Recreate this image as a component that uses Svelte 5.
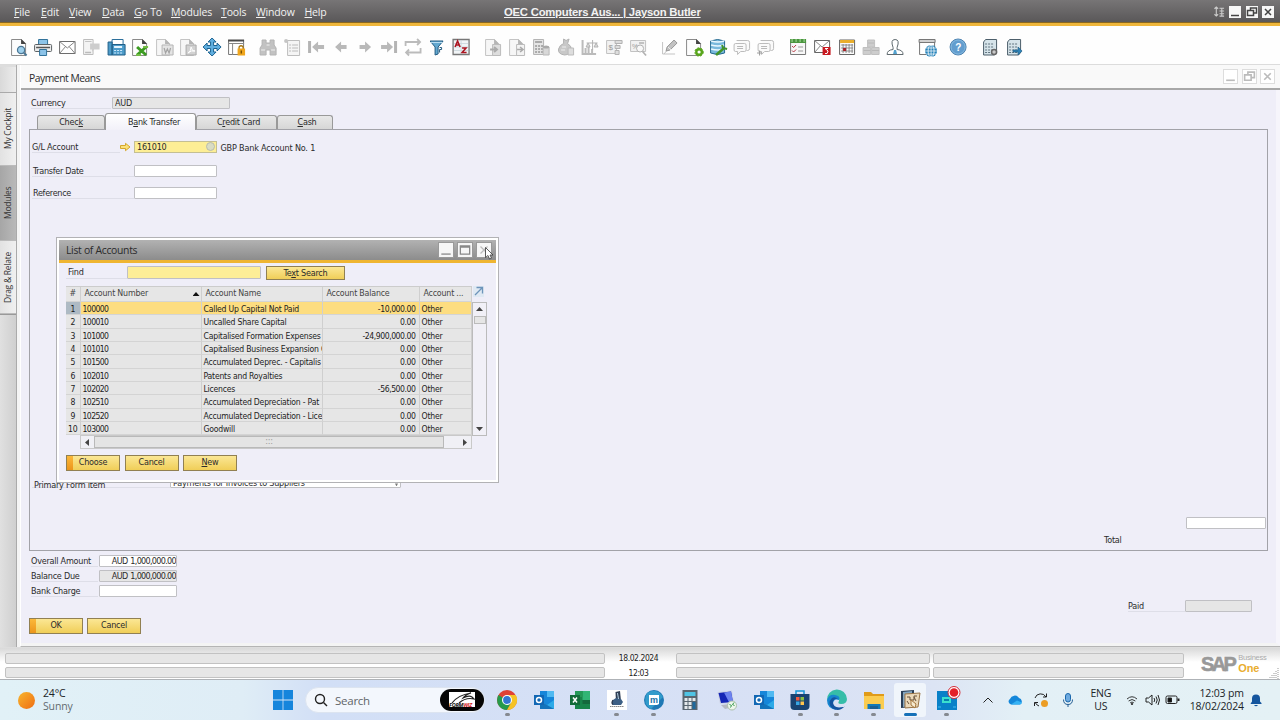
<script>
  const menus = [
    { key: "F", rest: "ile", width: 27 },
    { key: "E", rest: "dit", width: 28 },
    { key: "V", rest: "iew", width: 33 },
    { key: "D", rest: "ata", width: 32 },
    { key: "G", rest: "o To", width: 37 },
    { key: "M", rest: "odules", width: 50 },
    { key: "T", rest: "ools", width: 35 },
    { key: "W", rest: "indow", width: 48.5 },
    { key: "H", rest: "elp", width: 40 },
  ];

  const page = `<path d="M4.5 4.5h10l4 4v12h-14z" fill="#fdfdfd" stroke="#8a8a8a"/><path d="M14 4l5 5h-5z" fill="#444"/>`;
  const greyPage = `<path d="M4.5 4.5h9l4 4v12h-13z" fill="#f6f6f6" stroke="#c4c4c4"/><path d="M13 4l5 5h-5z" fill="#b5b5b5"/>`;
  const server = `<path d="M5.5 7l2-2.5h11v13l-2 2.5h-11z" fill="#d6e4ea" stroke="#4d5f6b"/><path d="M7 9h9M7 12h9M7 15h9M7 17.5h9" stroke="#60747f" stroke-dasharray="2 1"/>`;
  const globe = `<circle r="6" fill="#2583ba"/><path d="M-6 0h12M0-6v12M-5-3h10M-5 3h10" stroke="#fff" stroke-width=".7"/><ellipse rx="3" ry="6" fill="none" stroke="#fff" stroke-width=".8"/>`;
  const bubble = `<path d="M6.5 5.5h11q2 0 2 2v6q0 2-2 2h-1M5.5 8.5h9q1.5 0 1.5 1.5v5q0 1.5-1.5 1.5h-4l-3 3v-3h-2Q4 16.5 4 15V10q0-1.5 1.5-1.5z" fill="#fafafa" stroke="#bcbcbc"/><path d="M7 11.5h6M7 13.5h6" stroke="#b8b8b8"/>`;

  const toolGroups = [
    [
      page + `<circle cx="14" cy="15" r="3.6" fill="#9fd0ec" stroke="#4b7795" stroke-width="1.3"/><path d="M16.7 17.7l2.8 2.8" stroke="#4b7795" stroke-width="2"/>`,
      `<path d="M7.5 4.5h9v5h-9z" fill="#8cc3e8" stroke="#32739b"/><rect x="3.5" y="9.5" width="17" height="7" rx="1" fill="#eee" stroke="#5c6265"/><path d="M5 12.5h14" stroke="#555" stroke-width="1.5"/><path d="M8.5 14.5h7v6h-7z" fill="#8cc3e8" stroke="#32739b"/>`,
      `<path d="M4.5 6.5H20v12H4.5z" fill="#fff" stroke="#6d6d6d"/><path d="M4.5 6.5l7.75 6.500L20 6.500M4.500 18.500l6-7M20 18.500l-6-7" fill="none" stroke="#888"/>`,
      `<path d="M4.5 4.5H14v15H4.5z" fill="#f4f4f4" stroke="#bdbdbd"/><path d="M6 6.5h6.5" stroke="#c4c4c4"/><path d="M11 8.5h9.5v6H15L13 17v-2.5h-2z" fill="#cdcdcd"/><path d="M6 17.5h6" stroke="#bbb" stroke-width="1.5"/>`,
      `<path d="M8 4.5h11v6H8z" fill="#fff" stroke="#2c6f9b"/><path d="M4 7h4v13H4zM8 9.5h13V20H8z" fill="#4c9bc9" stroke="#215f88"/><path d="M10 12h8" stroke="#e4f5ff" stroke-width="2"/><path d="M10 15.5h9M10 18h9" stroke="#cdeaff" stroke-dasharray="2 1"/>`,
      page + `<path d="M9 12l9 8M18 12l-9 8" stroke="#3d9c22" stroke-width="3"/><path d="M8 20h5M15 12h5" stroke="#73bd44" stroke-width="2"/>`,
      greyPage + `<path d="M10 10h11v10H10z" fill="#e4e4e4" stroke="#b5b5b5"/><path d="M12 13l1.5 5 1.8-4 1.7 4 1.5-5" fill="none" stroke="#a4a4a4" stroke-width="1.2"/>`,
      greyPage + `<path d="M10 10h10v10H10z" fill="#d2d2d2" stroke="#aaa"/><path d="M12 18q3-2 3-6 1 5 4 4-4-1-7 2" fill="none" stroke="#fff"/>`,
      `<path d="M12 3l4 4h-2.5v3.5H17V8l4 4-4 4v-2.5h-3.5V17H16l-4 4-4-4h2.5v-3.500H7V16l-4-4 4-4v2.500h3.500V7H8z" fill="#60afe0" stroke="#1c6391"/>`,
      `<path d="M4.5 5.5h15v14h-15z" fill="#fff" stroke="#777"/><path d="M4 5.5h16" stroke="#4a4a4a" stroke-width="2"/><path d="M4 8.5h16M8.5 9v11" stroke="#888"/><path d="M15 14v-2q2-2.5 4 0v2" fill="none" stroke="#aa7913" stroke-width="1.3"/><path d="M13.5 13.5H21v7h-7.5z" fill="#efa51c"/><path d="M17.2 15.5v3" stroke="#714b00" stroke-width="1.3"/>`,
    ],
    [
      `<path d="M6 5h4v3h4V5h4v5l2 3v7h-6v-5h-4v5H4v-7l2-3z" fill="#c2c2c2" stroke="#b4b4b4"/><path d="M5 15h4M15 15h4M10.5 10h3" stroke="#f0f0f0"/>`,
      `<path d="M7.5 5.5h12v15h-12z" fill="#f5f5f5" stroke="#bdbdbd"/><circle cx="6" cy="6" r="2" fill="#c5c5c5"/><path d="M9 10h2M12 10h6M9 13h2M12 13h6M9 16h2M12 16h6" stroke="#bbb"/>`,
      `<path d="M5.5 6v12" stroke="#b4b4b4" stroke-width="3"/><path d="M8 12l6-5.5V10h6v4h-6v3.5z" fill="#b9b9b9"/>`,
      `<path d="M6 12l6-5.5V10h5.5v4H12v3.5z" fill="#b9b9b9"/>`,
      `<path d="M18 12l-6-5.5V10H6.5v4H12v3.5z" fill="#b9b9b9"/>`,
      `<path d="M18.5 6v12" stroke="#b4b4b4" stroke-width="3"/><path d="M16 12l-6-5.5V10H4v4h6v3.5z" fill="#b9b9b9"/>`,
      `<path d="M4.5 11V7h14M16 4l3 3-3 3M19.5 13v4.5h-14M8 14.5l-3 3 3 3" fill="none" stroke="#bbb" stroke-width="1.8"/>`,
      `<path d="M5 6h13l-5 6v7l-3 1v-8z" fill="#62a8d0" stroke="#245c82"/><path d="M6 7.5h11" stroke="#b9def3"/><path d="M14.5 12.5h2v2h-2v3" fill="none" stroke="#245c82"/>`,
      `<path d="M4 4.5h16v15H4z" fill="#f1f4f6" stroke="#777" stroke-width="1.3"/><path d="M5 12h14M12 5v14M5 8.5h14M5 15.5h14" stroke="#c8d4da" stroke-width=".8"/><path d="M6 12l2.5-6L11 12M7 10h3" fill="none" stroke="#ac1420" stroke-width="1.6"/><path d="M13 13h4l-4 4.5h4.5" fill="none" stroke="#ac1420" stroke-width="1.5"/>`,
    ],
    [
      greyPage + `<path d="M11.5 9.5h8v11h-8z" fill="#ddd" stroke="#bbb"/><path d="M9 14.5h6M13 12l3 2.5-3 2.5" fill="none" stroke="#aaa" stroke-width="1.8"/>`,
      greyPage + `<path d="M11.5 9.5h8v11h-8z" fill="#f3f3f3" stroke="#bbb"/><path d="M12 14.5h6M15 12l3 2.5-3 2.5" fill="none" stroke="#aaa" stroke-width="1.5"/>`,
      `<path d="M4.5 4.5h10v15h-10z" fill="#e5e5e5" stroke="#b5b5b5"/><path d="M6 7h7" stroke="#aaa" stroke-width="2"/><path d="M6 11h8M6 14h8M6 17h8" stroke="#aaa" stroke-width="2" stroke-dasharray="2 1"/><path d="M14 12h6v8h-6z" fill="#d8d8d8" stroke="#b9b9b9"/><ellipse cx="17" cy="12" rx="3" ry="1.5" fill="#aaa"/>`,
      `<path d="M9.5 4L12 5.5 15 4l-1.5 4.5q4 2 4 7-1 4-7 4.5-7-1-6-6 1-4 5-5.5z" fill="#c8c8c8" stroke="#b2b2b2"/><path d="M14 13h5.5v7H14z" fill="#ddd" stroke="#bbb"/><path d="M8 12h4M7 15h4" stroke="#eee"/>`,
      `<path d="M4.5 5v14H18M7.5 18v-5M10.5 18V10M14 18v-4" stroke="#bbb" stroke-width="2"/><path d="M8.5 8h11M14.5 5v10M10 8l-2 4h4zM18 8l-2 4h4z" fill="#ddd" stroke="#b2b2b2"/>`,
      `<path d="M4.5 5.5h10v13h-10z" fill="#f1f1f1" stroke="#c2c2c2"/><text x="6.5" y="15" font-size="8" fill="#999">$</text><path d="M13 5.5h7v3h-7zM13 10.5h5v3h-5zM13 15.5h4v4h-4z" fill="#ddd" stroke="#b2b2b2"/>`,
      `<path d="M4.5 5.5h15v11h-15z" fill="#f1f1f1" stroke="#c2c2c2"/><text x="6" y="14" font-size="7" fill="#999">%</text><circle cx="14" cy="13.5" r="3.5" fill="#f8f8f8" stroke="#b2b2b2"/><path d="M16.5 16.5l3.5 4M13 8h5" stroke="#b2b2b2" stroke-width="1.7"/>`,
    ],
    [
      `<path d="M4.5 7v12H17M6 19l3-4" fill="none" stroke="#c4c4c4"/><path d="M8 16l1-4 7-7 3 3-7 7z" fill="#c3c3c3" stroke="#999"/><path d="M10 12l3 3" stroke="#eee"/>`,
      page + `<circle cx="17" cy="17" r="2.8" fill="#fff" stroke="#58a51b" stroke-width="2.4"/><circle cx="17" cy="17" r="4.2" fill="none" stroke="#58a51b" stroke-dasharray="2 1.5"/>`,
      `<path d="M4.5 6q7-3 14 0v12q-7 3-14 0z" fill="#79b9dd" stroke="#26698f"/><path d="M5 6q7 2 13 0M5 10q7 2 13 0M5 14q7 2 13 0" fill="none" stroke="#e9f8ff" stroke-width="1.5"/><path d="M10 20l8-7" stroke="#429429" stroke-width="2.5"/><path d="M16 10l1 3 4 1" stroke="#429429" stroke-width="2" fill="none"/>`,
      bubble,
      bubble + `<path d="M3 18h5M5.5 15.5v5" stroke="#999"/>`,
    ],
    [
      `<path d="M4.5 6.5h15v13h-15z" fill="#f7f7f7" stroke="#777"/><path d="M4 6h16" stroke="#4b963f" stroke-width="4"/><path d="M6 4v3M10 4v3M14 4v3M18 4v3" stroke="#a8d99e"/><path d="M6 11l1.5 1.5L10 10M6 15.5L7.5 17l2.5-2.5" fill="none" stroke="#b73541"/><path d="M12 12h5M12 16h5" stroke="#999"/>`,
      `<path d="M4.5 5.5h15v12h-15z" fill="#fff" stroke="#666"/><path d="M4.5 5.5L12 12l7.5-6.5M4.5 17.5l6-7" fill="none" stroke="#888"/><path d="M12.5 12h8v8h-8z" fill="#c71920"/><path d="M18 13.5h-3l3 2.5-1 2.5h-2" fill="none" stroke="#fff"/>`,
      `<path d="M4.5 5h15v14.5h-15z" fill="#fafafa" stroke="#666"/><path d="M5 6.5h14" stroke="#e9ae2b" stroke-width="3"/><path d="M6 10h12M6 13h12M6 16h12M8 9v9M11 9v9M14 9v9M17 9v9" stroke="#777" stroke-width=".8"/><path d="M8 13h3v3H8z" fill="#a92128"/>`,
      `<path d="M8.5 5h7v7h-7zM4 12.5h7.5v7H4zM12.5 12.5H20v7h-7.5z" fill="#cdcdcd" stroke="#c0c0c0"/><path d="M9 8h6M4.5 15.5h7M13 15.5h7" stroke="#b8b8b8"/>`,
      `<path d="M4 19.5q0-4.5 6-5v-2q-3-8 2-8t2 8v2q6 .5 6 5z" fill="#fff" stroke="#606b70"/><path d="M11 15h2l1 4h-4z" fill="#54a2cf"/>`,
    ],
    [`<path d="M4.5 6.5h15v13h-15z" fill="#fff" stroke="#777"/><path d="M4 4.5h16v3H4z" fill="#d1d1d1" stroke="#777"/><g transform="translate(16 16)">${globe}</g>`],
    [`<circle cx="12" cy="12" r="8" fill="#629dce" stroke="#4f83b0"/><circle cx="12" cy="12" r="7" fill="none" stroke="#83b8df"/><text x="9.2" y="15.6" font-size="10" font-weight="bold" fill="#fff">?</text>`],
    [
      server + `<circle cx="16" cy="17" r="2.5" fill="#c9c9c9" stroke="#666" stroke-width="1.5"/>`,
      server + `<path d="M11 15h5v-3l4 4-4 4v-3h-5z" fill="#2f83b6" stroke="#215f86" stroke-width=".7"/>`,
    ],
  ];

  const accounts = [
    ["100000", "Called Up Capital Not Paid", "-10,000.00"],
    ["100010", "Uncalled Share Capital", "0.00"],
    ["101000", "Capitalised Formation Expenses", "-24,900,000.00"],
    ["101010", "Capitalised Business Expansion C", "0.00"],
    ["101500", "Accumulated Deprec. - Capitalis", "0.00"],
    ["102010", "Patents and Royalties", "0.00"],
    ["102020", "Licences", "-56,500.00"],
    ["102510", "Accumulated Depreciation - Pat", "0.00"],
    ["102520", "Accumulated Depreciation - Lice", "0.00"],
    ["103000", "Goodwill", "0.00"],
  ];
  let selected = $state(0);

  const outlook = `<path d="M8 3h14v18H8z" fill="#1686d9"/><path d="M15 3h7v6h-7z" fill="#50b9f1"/><path d="M8 13l7 4 7-5v9H8z" fill="#2daae8"/><path d="M8 13l14 8H8z" fill="#1373bb"/><path d="M2 7h10v10H2z" fill="#1167b4"/><circle cx="7" cy="12" r="2.5" fill="none" stroke="#fff" stroke-width="1.5"/>`;

  const apps = [
    { name: "Chrome", open: true, art: `<circle cx="12" cy="12" r="10" fill="#e04135"/><path d="M12 12L3.4 7A10 10 0 0 0 12 22l4.3-7.5z" fill="#269a4b"/><path d="M12 12l4.3 2.5L12 22A10 10 0 0 0 20.7 7H12z" fill="#f5c325"/><circle cx="12" cy="12" r="5" fill="#fff"/><circle cx="12" cy="12" r="3.9" fill="#3476d2"/>` },
    { name: "Outlook", art: outlook },
    { name: "Excel", art: `<path d="M7 3h15v18H7z" fill="#18844a"/><path d="M14.5 3H22v9h-7.5z" fill="#31b575"/><path d="M7 3h7.5v6H7z" fill="#239957"/><path d="M14.5 12H22v4h-7.5z" fill="#14693c"/><path d="M2 7h10v10H2z" fill="#126b39"/><path d="M5 9.5l4 5M9 9.5l-4 5" stroke="#fff" stroke-width="1.5"/>` },
    { name: "Sailor", open: true, art: `<path d="M2 2h20v20H2z" fill="#fff"/><path d="M10.5 4L15 3l1 10-5 1z" fill="#303f55"/><path d="M11 10l-3 2q-2 3 0 5h8l2-3-2-3z" fill="#3c5f85"/><path d="M8 12q-2 3 0 4.5" fill="none" stroke="#223047" stroke-width="1.2"/><path d="M5 18.5h14" stroke="#888" stroke-dasharray="1.5 .5"/><path d="M12.5 5l1 6" stroke="#b7d3e5"/>` },
    { name: "Maxthon", open: true, art: `<circle cx="12" cy="12" r="10" fill="#1e78b5"/><path d="M5 5q10-6 16 4L9 21Q0 16 5 5z" fill="#329bcb"/><path d="M7 7h10v9l-2 1H7z" fill="#fff"/><text x="8" y="15" font-size="9" font-weight="bold" fill="#1771a8">m</text>` },
    { name: "Calculator", art: `<path d="M4.5 2h15v20h-15z" fill="#596671"/><path d="M6.5 4h11v4h-11z" fill="#4fc4e5"/><path d="M6.5 10h3v3h-3zM10.5 10h3v3h-3zM14.5 10h3v3h-3zM6.5 14h3v3h-3zM10.5 14h3v3h-3zM6.5 18h3v3h-3zM10.5 18h3v3h-3z" fill="#e4e9ec"/><path d="M14.5 14h3v7h-3z" fill="#1f699c"/>` },
    { name: "Remote Desktop", art: `<path d="M2.5 4L17 2.5 19 15 5 16z" fill="#cdd3e6"/><path d="M3.5 5L16 3.5 18 14 6 15z" fill="#1526b5"/><path d="M9 4.5l7-1L18 14l-4 .3z" fill="#6d83ee"/><path d="M6 17l10-1 3 3-9 2z" fill="#b7bbc3"/><circle cx="17" cy="17.5" r="4.5" fill="#edf6ec" stroke="#abc0aa"/><path d="M14.5 16.5l2 1-1 2M19 14.5l-1.5 2 2 1" stroke="#2e9446" fill="none"/>` },
    { name: "Outlook", art: outlook },
    { name: "Store", open: true, art: `<path d="M8 7V3h8v4" fill="none" stroke="#1397d8" stroke-width="1.5"/><path d="M2.5 6h19v12q0 4-4 4h-11q-4 0-4-4z" fill="#184372"/><path d="M8 9h3.5v3.5H8z" fill="#ef5840"/><path d="M12.5 9H16v3.5h-3.5z" fill="#87bd42"/><path d="M8 13.5h3.5V17H8z" fill="#39a6e3"/><path d="M12.5 13.5H16V17h-3.5z" fill="#ffc44d"/>` },
    { name: "Edge", open: true, art: `<path d="M2 12A10 10 0 0 1 22 11q0 5-6 5-4 0-2-3 1-3-3-4-6 0-9 3z" fill="#36bda8"/><path d="M2 12Q4 6 10 7q6 1 4 5-5-2-6 3-1 4 4 7Q2 21 2 12z" fill="#1685cf"/><path d="M8 14q0 7 10 5 2 0 2-1-6 7-13 2-5-5 0-10 3-2 6 1-4-1-5 3z" fill="#15549f"/>` },
    { name: "Files", open: true, art: `<path d="M2 4h7l2 2h11v6H2z" fill="#e09b19"/><path d="M2 8h20v13H2z" fill="#fbcc4f"/><path d="M5.5 16h13v5h-13z" fill="#1279b8"/><path d="M8 18h8v3H8z" fill="#1b5f92"/>` },
    { name: "SAP Business One", open: true, active: true, art: `<path d="M3 3l13-1v17L3 20z" fill="#293e57"/><path d="M5 4l9-1v15l-9 1z" fill="#84a6bf"/><path d="M7 6l15-1-2 14-13 1z" fill="#ead8b9" stroke="#9a7548"/><path d="M9 9h3v3h4V8h3M9 13l2 3M16 9l2 4" fill="none" stroke="#67513a"/><path d="M13 12l5 4-1 4-4-3z" fill="#f5ead0" stroke="#a6763c"/>` },
    { name: "Recorder", open: true, art: `<path d="M2 3h20v19H2z" fill="#0981c8"/><path d="M7 9h9v6H7z" fill="#3be0ce"/><path d="M9 11h5v2H9z" fill="#0581ab"/><path d="M3 19h3M18 19h3" stroke="#42baf0"/><circle cx="19" cy="4.5" r="6" fill="#fff" stroke="#d32b37"/><circle cx="19" cy="4.5" r="4.3" fill="#e32028"/>` },
  ];
</script>

<svelte:head><title>Payment Means</title></svelte:head>

{#snippet winButton(kind)}
  <svg viewBox="0 0 12 12">
    {#if kind === "min"}
      <path d="M2 9.500h8" />
    {:else if kind === "restore"}
      <path d="M4.500 4V2h6v5H8M1.500 4.500h6v5h-6z" />
    {:else if kind === "max"}
      <path d="M2 2.500h8v7H2zM2 3.500h8" />
    {:else}
      <path d="M3 3l6 6M9 3l-6 6" />
    {/if}
  </svg>
{/snippet}

<div class="screen">
  <header class="menubar">
    <nav>
      {#each menus as menu}
        <span style="width: {menu.width}px"><u>{menu.key}</u>{menu.rest}</span>
      {/each}
    </nav>
    <div class="session">OEC Computers Aus... | Jayson Butler</div>
    <div class="controls">
      <svg class="updown" viewBox="0 0 12 12"><path d="M2.500 1v10M.5 3l2-2 2 2M.5 9l2 2 2-2M6 2.500h5M6 5.500h5M6 8.500h5M6 11h5M8.500 2v9" /></svg>
      {#each ["min", "restore", "close"] as kind}
        <button aria-label={kind}>{@render winButton(kind)}</button>
      {/each}
    </div>
  </header>

  <div class="toolbar">
    {#each toolGroups as group}
      <div class="tool-group">
        {#each group as icon}
          <svg viewBox="0 0 24 24" fill="none">{@html icon}</svg>
        {/each}
      </div>
    {/each}
  </div>

  <div class="workspace">
    <aside>
      <div class="side-top"></div>
      <div class="side-tab">My Cockpit</div>
      <div class="side-tab current">Modules</div>
      <div class="side-tab">Drag &amp; Relate</div>
      <div class="side-rest"></div>
    </aside>

    <main>
      <div class="window-title">
        <span>Payment Means</span>
        <div class="controls faded">
          {#each ["min", "restore", "close"] as kind}
            <button aria-label={kind}>{@render winButton(kind)}</button>
          {/each}
        </div>
      </div>

      <div class="form">
        <div class="row currency">
          <label for="currency">Currency</label>
          <input id="currency" class="readonly" value="AUD" readonly />
        </div>

        <div class="tabs">
          <div class="tab check">Chec<u>k</u></div>
          <div class="tab transfer">B<u>a</u>nk Transfer</div>
          <div class="tab credit">C<u>r</u>edit Card</div>
          <div class="tab cash"><u>C</u>ash</div>
        </div>

        <section class="panel">
          <div class="row gl">
            <label for="gl">G/L Account</label>
            <svg class="link-arrow" viewBox="0 0 11 9"><path d="M.5 3h5V.8l4.500 3.700-4.500 3.700V6h-5z" /></svg>
            <div class="lookup">
              <input id="gl" value="161010" />
              <i></i>
            </div>
            <span class="gl-name">GBP Bank Account No. 1</span>
          </div>
          <div class="row date">
            <label for="date">Transfer Date</label>
            <input id="date" />
          </div>
          <div class="row reference">
            <label for="ref">Reference</label>
            <input id="ref" />
          </div>
          <div class="row primary">
            <label for="primary">Primary Form Item</label>
            <div class="select" id="primary">Payments for Invoices to Suppliers<b></b></div>
          </div>
          <div class="total">
            <input aria-label="Total" />
            <span>Total</span>
          </div>
        </section>

        <div class="summary">
          <div class="amounts">
            <div class="row overall"><label for="overall">Overall Amount</label><input id="overall" value="AUD 1,000,000.00" /></div>
            <div class="row due"><label for="due">Balance Due</label><input id="due" class="readonly" value="AUD 1,000,000.00" readonly /></div>
            <div class="row charge"><label for="charge">Bank Charge</label><input id="charge" /></div>
          </div>
          <div class="row paid"><label for="paid">Paid</label><input id="paid" class="readonly" readonly /></div>
        </div>

        <div class="actions">
          <button class="gold default">OK</button>
          <button class="gold">Cancel</button>
        </div>
      </div>
    </main>
  </div>

  <footer class="status">
    <div class="bars first"><i></i><i></i></div>
    <div class="stamp"><span>18.02.2024</span><span>12:03</span></div>
    <div class="bars second"><i></i><i></i></div>
    <div class="bars third"><i></i><i></i></div>
    <div class="brand">
      <strong>SAP</strong>
      <div><span>Business</span><b>One</b></div>
    </div>
    <svg class="grip" viewBox="0 0 11 12"><path d="M9 1v11M7 4v8M5 6v6M3 8v4M1 10v2" /></svg>
  </footer>

  <div class="taskbar">
    <div class="weather">
      <i></i>
      <div><span>24°C</span><span class="dim">Sunny</span></div>
    </div>
    <svg class="start" viewBox="0 0 20 20"><path d="M0 0h9.600v9.600H0zM10.400 0H20v9.600h-9.600zM0 10.400h9.600V20H0zM10.400 10.400H20V20h-9.600z" /></svg>
    <div class="search">
      <svg viewBox="0 0 14 14"><circle cx="6" cy="6" r="4.500" /><path d="M9.500 9.500l3.500 3.500" /></svg>
      <span>Search</span>
      <div class="badge">
        <svg viewBox="0 0 28 16">
          <path d="M1 0h26v15H1z" fill="#fff" />
          <path d="M4 11Q10 3 23 1q-6 2-8 5 6-3 9-1l2 2q-8-2-15 4" fill="none" stroke="#222" stroke-width="1.200" />
          <text x="1" y="15" font-size="5.500" font-weight="bold" font-style="italic" fill="#111">FORM<tspan fill="#d52424">WIZ</tspan></text>
        </svg>
      </div>
    </div>
    <div class="apps">
      {#each apps as app}
        <div class="app" class:active={app.active} title={app.name}>
          <svg viewBox="0 0 24 24">{@html app.art}</svg>
          {#if app.open}<i></i>{/if}
        </div>
      {/each}
    </div>
    <div class="tray">
      <svg class="chevron" viewBox="0 0 16 16"><path d="M3.500 10.500L8 6l4.500 4.500" /></svg>
      <svg class="cloud" viewBox="0 0 16 16"><path d="M4 12.500a3 3 0 0 1-1-5.500 5 5 0 0 1 9-1 3.500 3.500 0 0 1 1 6.500z" fill="#1487da" /><path d="M4 12.500l6-4 5 2q-.5 2-2 2z" fill="#35b2f4" /></svg>
      <svg class="sync" viewBox="0 0 16 16"><path d="M2 6a6 6 0 0 1 11-1M13.500 1.500V5H10M2 10q1 3 4 4M1.500 14v-3.500H5" /><circle cx="11.500" cy="11.500" r="3.500" /></svg>
      <svg class="mic" viewBox="0 0 16 16"><rect x="5.500" y="1.500" width="5" height="8.500" rx="2.500" fill="#6eabe0" stroke="#1a67ac" /><path d="M3.500 7.500q0 5 4.500 5t4.500-5M8 12.500V15" /></svg>
      <div class="lang"><span>ENG</span><span>US</span></div>
      <svg class="wifi" viewBox="0 0 16 16"><path d="M3 7q5-4.500 10 0M4.600 9q3.400-3 6.800 0M6.200 10.800q1.800-1.500 3.600 0" /><circle cx="8" cy="12" r="1.100" fill="#222" stroke="none" /></svg>
      <svg class="volume" viewBox="0 0 16 16"><path d="M2 6h2.500L8 3v10l-3.500-3H2zM10 6q1.500 2 0 4M12 4.500q2.500 3.500 0 7M14 3q3 5 0 10" /></svg>
      <svg class="battery" viewBox="0 0 16 16"><rect x="2" y="4" width="11" height="7.500" rx="1.500" /><path d="M4 6h3.500v4H4z" fill="#111" /><path d="M14.500 6.500v2.500" stroke-width="2" /></svg>
      <div class="clock"><span>12:03 pm</span><span>18/02/2024</span></div>
      <svg class="bell" viewBox="0 0 12 14"><path d="M1 10l1-1.500V5.500Q2 1.500 6 1.500t4 4v3L11.500 10v1h-11zM4 12h4q-2 2.500-4 0z" /></svg>
    </div>
  </div>

  <div class="dialog" role="dialog" aria-label="List of Accounts">
    <div class="dialog-title">
      <span>List of Accounts</span>
      <div class="controls">
        {#each ["min", "max", "close"] as kind}
          <button aria-label={kind} class:hover={kind === "close"}>{@render winButton(kind)}</button>
        {/each}
      </div>
    </div>
    <div class="dialog-body">
      <div class="row find">
        <label for="find">Find</label>
        <input id="find" />
        <button class="gold">Te<u>x</u>t Search</button>
      </div>

      <div class="grid-wrap">
        <div class="grid">
          <div class="line head">
            <span>#</span>
            <span>Account Number<b class="sort"></b></span>
            <span>Account Name</span>
            <span>Account Balance</span>
            <span>Account ...</span>
          </div>
          {#each accounts as [number, name, balance], i}
            <!-- svelte-ignore a11y_click_events_have_key_events, a11y_no_static_element_interactions -->
            <div class="line" class:selected={selected === i} onclick={() => (selected = i)}>
              <span>{i + 1}</span>
              <span>{number}</span>
              <span>{name}</span>
              <span>{balance}</span>
              <span>Other</span>
            </div>
          {/each}
          <div class="hscroll"><b class="left"></b><i>:::</i><b class="right"></b></div>
        </div>
        <div class="grid-side">
          <svg viewBox="0 0 11 11"><path d="M2 9l7-7M3.500 1.500H9.500V7.500" /></svg>
          <div class="vscroll"><b class="up"></b><i></i><b class="down"></b></div>
        </div>
      </div>

      <div class="actions">
        <button class="gold default">Choose</button>
        <button class="gold">Cancel</button>
        <button class="gold"><u>N</u>ew</button>
      </div>
    </div>
  </div>

  <svg class="cursor" viewBox="0 0 9 13"><path d="M.5.5v10l2.500-2 1.500 3.500 2-.8L5 8h3z" /></svg>
</div>

<style>
  :global(body) {
    margin: 0;
    overflow: hidden;
  }

  .screen {
    position: relative;
    display: flex;
    flex-direction: column;
    width: 1280px;
    height: 720px;
    overflow: hidden;
    background: #fff;
    color: #2b2b2b;
    font: 9px/12px "DejaVu Sans Condensed", "DejaVu Sans", sans-serif;
    letter-spacing: -0.24px;
  }

  .screen * {
    box-sizing: border-box;
  }

  svg {
    display: block;
    flex: none;
  }

  button,
  input {
    margin: 0;
    padding: 0;
    font: inherit;
    color: inherit;
    letter-spacing: inherit;
  }

  u {
    text-underline-offset: 1px;
  }

  /* top bar */
  .menubar {
    display: flex;
    align-items: center;
    height: 26px;
    padding: 1px 6px 0 14px;
    background: linear-gradient(#777576, #5b595a 21px);
    border-bottom: 3px solid #efb63a;
    box-shadow: inset 0 -1px #8b6820;
    color: #f2f2f2;
    font: 10.5px/14px "Open Sans", sans-serif;
  }

  .menubar nav {
    display: flex;
    width: 490px;
  }

  .menubar nav span {
    flex: none;
    white-space: nowrap;
    letter-spacing: -0.15px;
  }

  .session {
    flex: 1;
    font: bold 11.3px/14px "Liberation Sans", sans-serif;
    letter-spacing: -0.23px;
    text-decoration: underline;
  }

  .controls {
    display: flex;
    align-items: center;
    gap: 4.5px;
  }

  .controls button {
    width: 12px;
    height: 12px;
    border: 0;
    background: #f7f7f7;
  }

  .controls svg {
    width: 100%;
    height: 100%;
    fill: none;
    stroke: #444;
    stroke-width: 1.5;
  }

  .controls .updown {
    width: 11px;
    height: 11px;
    stroke: #ccc;
    stroke-width: 1.2;
  }

  .toolbar {
    display: flex;
    align-items: center;
    gap: 7.6px;
    height: 39px;
    padding: 5px 0 0 7px;
    border-bottom: 1px solid #dcdcdc;
    background: #fefefe;
  }

  .tool-group {
    display: flex;
  }

  .tool-group svg {
    width: 24.16px;
    height: 24px;
    font-family: "Liberation Sans", sans-serif;
  }

  /* left rail */
  .workspace {
    display: flex;
    height: 583px;
    background: #f4f4f4;
  }

  aside {
    display: flex;
    flex: none;
    flex-direction: column;
    width: 17px;
    margin-right: 3px;
    padding-top: 2px;
    border-right: 1px solid #aaa;
    background: #ddd;
  }

  .side-top {
    height: 26px;
    background: linear-gradient(90deg, #d9d9d9, #ececec);
    border-bottom: 1px solid #aaa;
  }

  .side-tab {
    height: 73px;
    border-top: 1px solid #bbb;
    background: linear-gradient(90deg, #f0f0f0, #e2e2e2);
    color: #333;
    font: 8.5px/16px "Open Sans", sans-serif;
    letter-spacing: -0.25px;
    text-align: center;
    writing-mode: vertical-rl;
    transform: rotate(180deg);
  }

  .side-tab.current {
    height: 75px;
    background: linear-gradient(90deg, #b9b9b9, #a6a6a6);
  }

  .side-rest {
    flex: 1;
    border-top: 1px solid #999;
    background: linear-gradient(90deg, #e0e0e0, #cfcfcf);
  }

  /* payment window */
  main {
    display: flex;
    flex: 1;
    flex-direction: column;
    border-left: 1px solid #fff;
    border-bottom: 1px solid #b5b5b5;
  }

  .window-title {
    display: flex;
    justify-content: space-between;
    height: 25px;
    padding: 0 5px 0 8px;
    border-bottom: 2px solid #a8a8a8;
    background: #f9f9f9;
    font: 10.3px/26px "Open Sans", sans-serif;
    letter-spacing: -0.45px;
  }

  .faded {
    gap: 3.5px;
  }

  .faded button {
    width: 15px;
    height: 15px;
    border: 1px solid #ddd;
    background: #fff;
  }

  .faded svg {
    stroke: #bbb;
  }

  .form {
    flex: 1;
    padding: 7px 8px 0 8px;
    border-right: 4px solid #f6f5fb;
    border-bottom: 3px solid #f4f4f4;
    background: #efeef8;
  }

  .row {
    display: flex;
    height: 12px;
  }

  .row label {
    height: 12px;
    border-bottom: 1px solid #dedee8;
    line-height: 13px;
  }

  input,
  .select {
    width: 82.5px;
    height: 12px;
    border: 1px solid #c0c0c4;
    border-radius: 1px;
    outline: 0;
    background: #fff;
    padding: 0 2px;
    line-height: 10px;
  }

  input.readonly {
    background: #e6e6e6;
  }

  .currency label {
    width: 80px;
    margin-left: 2px;
    margin-right: 1px;
  }

  .currency input {
    width: 118px;
  }

  .tabs {
    display: flex;
    align-items: flex-end;
    height: 20px;
    padding-left: 8px;
  }

  .tab {
    height: 14px;
    border: 1px solid #999;
    border-bottom: 0;
    border-radius: 3px 3px 0 0;
    background: linear-gradient(#e8e8e8, #d6d6d6);
    line-height: 13px;
    text-align: center;
  }

  .check {
    width: 68px;
  }

  .transfer {
    width: 91px;
    height: 17px;
    margin-bottom: -1px;
    padding: 2px 0 0 7px;
    background: linear-gradient(#fff, #f2f1f9);
  }

  .credit {
    width: 81px;
    padding-left: 4px;
  }

  .cash {
    width: 56px;
    padding-left: 4px;
  }

  .panel {
    height: 422px;
    padding-top: 11px;
    border: 1px solid #a2a2a8;
  }

  .panel .row {
    padding-left: 2px;
  }

  .panel label {
    width: 102px;
  }

  .panel .gl label {
    width: 88px;
    line-height: 12px;
  }

  .link-arrow {
    width: 11px;
    height: 10px;
    margin: 1px 3px 0 0;
    fill: #fbe17a;
    stroke: #d5a72c;
  }

  .lookup {
    display: flex;
    align-items: center;
    width: 82.5px;
    height: 12px;
    border: 1px solid #c4bf93;
    background: #fdee95;
  }

  .lookup input {
    width: 71px;
    border: 0;
    background: none;
  }

  .lookup i {
    width: 9px;
    height: 9px;
    border: 1px solid #b9bcae;
    border-radius: 50%;
    background: #d9dcc4;
  }

  .gl-name {
    padding: 1px 0 0 4px;
    letter-spacing: -0.18px;
  }

  .date {
    margin-top: 12.5px;
  }

  .date label,
  .reference label {
    padding-left: 1px;
    letter-spacing: -0.3px;
  }

  .reference {
    margin-top: 10px;
  }

  .panel .primary label {
    width: 138px;
    padding: 3px 0 0 2px;
    line-height: 12px;
  }

  .primary {
    height: 14px;
    margin-top: 277px;
  }

  .primary .select {
    display: flex;
    justify-content: space-between;
    width: 231px;
    line-height: 12px;
  }

  .primary b {
    width: 3px;
    height: 3px;
    margin-top: 6px;
    background: #777;
    clip-path: polygon(0 0, 100% 0, 50% 100%);
  }

  .total {
    display: flex;
    flex-direction: column;
    margin: 26.5px 0 0 1156px;
  }

  .total input {
    width: 80px;
  }

  .total span {
    margin: 5.5px 0 0 -82px;
  }

  .summary {
    display: flex;
    justify-content: space-between;
    padding: 4px 16px 0 2px;
  }

  .amounts label {
    width: 67px;
    margin-right: 1px;
    white-space: nowrap;
  }

  .amounts input {
    width: 78px;
    padding: 0;
    letter-spacing: -0.7px;
    word-spacing: 1px;
    text-align: right;
  }

  .due {
    margin: 3.5px 0 2.5px;
  }

  .paid {
    margin-top: 45px;
  }

  .paid label {
    width: 57px;
  }

  .paid input {
    width: 67px;
  }

  .actions {
    display: flex;
    gap: 4.5px;
  }

  .form > .actions {
    gap: 4px;
    margin-top: 6px;
  }

  .gold {
    width: 54px;
    height: 16px;
    border: 1px solid #918052;
    background: linear-gradient(#fbe795, #f0ce58);
    line-height: 13px;
    text-align: center;
  }

  .gold.default {
    background:
      linear-gradient(#fbb83a, #ec951c) left / 6px 100% no-repeat,
      linear-gradient(#fbe795, #f0ce58);
  }

  /* status bar */
  .status {
    display: flex;
    height: 33px;
    padding: 5px 0 0 5px;
    border-top: 1px solid #ddd;
    border-bottom: 1px solid #aeb2b6;
    background: linear-gradient(#d9d9d9, #fff 14px);
  }

  .bars {
    display: flex;
    flex-direction: column;
    gap: 3px;
  }

  .bars i {
    height: 11px;
    border: 1px solid #c2c2c2;
    border-radius: 2px;
    background: #e6e6e6;
  }

  .first {
    width: 600px;
  }

  .second {
    width: 254px;
    margin-right: 3px;
  }

  .third {
    width: 251px;
  }

  .stamp {
    display: flex;
    flex-direction: column;
    align-items: center;
    gap: 3px;
    width: 67px;
    margin-right: 4px;
    margin-top: -1px;
    color: #222;
    font-size: 8.5px;
    letter-spacing: -0.45px;
  }

  .stamp span {
    height: 12px;
  }

  .brand {
    display: flex;
    margin: 0 0 0 17px;
    font-family: "Liberation Sans", sans-serif;
  }

  .brand strong {
    color: #999;
    font-size: 20px;
    line-height: 23px;
    letter-spacing: -2.6px;
    -webkit-text-stroke: 0.6px #999;
  }

  .brand div {
    display: flex;
    flex-direction: column;
    margin-left: 4px;
  }

  .brand span {
    color: #aaa;
    font-size: 7.5px;
    line-height: 9px;
    letter-spacing: -0.3px;
  }

  .brand b {
    color: #e9ad2f;
    font-size: 11px;
    line-height: 12px;
    letter-spacing: -0.2px;
  }

  .grip {
    width: 11px;
    height: 12px;
    margin: 14px 0 0 auto;
    stroke: #999;
    stroke-dasharray: 1 1;
  }

  /* taskbar */
  .taskbar {
    display: flex;
    align-items: center;
    height: 40px;
    background: linear-gradient(90deg, #e1f1f7, #dfedf6 19%, #d2dff6 25%, #d8e1f5 60%, #dce4f4 73%, #e3f0f6 80%, #e4f1f5);
    color: #202428;
    font: 10.5px/13px "Open Sans", sans-serif;
  }

  .weather {
    display: flex;
    align-items: center;
    width: 273px;
    padding-left: 18px;
  }

  .weather i {
    width: 17px;
    height: 17px;
    margin-right: 8px;
    border-radius: 50%;
    background: linear-gradient(135deg, #f8b62e, #ef6c13);
  }

  .weather div,
  .lang,
  .clock {
    display: flex;
    flex-direction: column;
    letter-spacing: -0.15px;
  }

  .dim {
    color: #636b70;
  }

  .start {
    width: 20px;
    height: 20px;
    fill: #1585dc;
  }

  .search {
    display: flex;
    align-items: center;
    width: 180px;
    height: 26px;
    margin-left: 12px;
    padding: 0 0 0 8px;
    border: 1px solid #dce4f0;
    border-radius: 13px;
    background: #f3f7fd;
  }

  .search > svg {
    width: 14px;
    height: 14px;
    fill: none;
    stroke: #222;
    stroke-width: 1.4;
  }

  .search span {
    flex: 1;
    margin-left: 7px;
    color: #606468;
    font-size: 11.5px;
    letter-spacing: -0.25px;
  }

  .badge {
    display: flex;
    align-items: center;
    justify-content: center;
    width: 44px;
    height: 22px;
    border-radius: 11px;
    background: #050505;
  }

  .badge svg {
    width: 28px;
    height: 16px;
  }

  .apps {
    display: flex;
    gap: 4.67px;
    margin-left: 6px;
  }

  .app {
    display: flex;
    flex-direction: column;
    align-items: center;
    width: 32px;
    height: 34px;
    padding-top: 5px;
    border-radius: 3px;
  }

  .app.active {
    background: #f0f5fb;
  }

  .app svg {
    width: 24px;
    height: 24px;
    overflow: visible;
    font-family: "Liberation Sans", sans-serif;
  }

  .app i {
    width: 5px;
    height: 2.5px;
    margin-top: 1px;
    border-radius: 2px;
    background: #858990;
  }

  .app.active i {
    width: 13px;
    background: #1671b8;
  }

  .tray {
    display: flex;
    align-items: center;
    margin-left: 17px;
  }

  .tray svg {
    width: 16px;
    height: 16px;
    fill: none;
    stroke: #222;
  }

  .tray .cloud {
    margin: 0 10.5px 0 11px;
    stroke: none;
  }

  .tray .sync circle {
    fill: #eb9d25;
    stroke: none;
  }

  .tray .mic {
    margin-left: 11px;
    stroke: #245e94;
  }

  .lang {
    align-items: center;
    width: 40px;
    margin-left: 4.5px;
  }

  .tray .wifi {
    margin-left: 3px;
    stroke-width: 0.9;
  }

  .volume,
  .battery {
    margin-left: 4px;
  }

  .clock {
    align-items: flex-end;
    width: 64px;
  }

  .tray .bell {
    width: 12px;
    height: 14px;
    margin-left: 6px;
    fill: #15569e;
    stroke: none;
  }

  /* account picker */
  .dialog {
    position: absolute;
    left: 56px;
    top: 237px;
    display: flex;
    flex-direction: column;
    width: 443px;
    height: 246px;
    padding: 2px;
    border: 1px solid #b2b2b5;
    background: #fff;
  }

  .dialog-title {
    display: flex;
    flex: none;
    align-items: center;
    justify-content: space-between;
    height: 23px;
    padding: 0 4px 0 7px;
    border-bottom: 3px solid #efb531;
    background: linear-gradient(#b2b2b2, #8c8c8c);
    font: 10.4px/18px "Open Sans", sans-serif;
    letter-spacing: -0.3px;
  }

  .dialog-title .controls {
    gap: 3px;
  }

  .dialog-title button {
    width: 16px;
    height: 16px;
    border: 1px solid #999;
    background: #f6f6f6;
  }

  .dialog-title svg {
    stroke: #888;
    stroke-width: 1.1;
  }

  .dialog-title .hover svg {
    stroke: #bbb;
  }

  .dialog-body {
    flex: 1;
    padding: 3px 7px 0;
    background: #efeef8;
  }

  .find {
    height: 14px;
  }

  .find label {
    width: 61px;
    height: 13px;
    padding-left: 2px;
  }

  .find input {
    width: 134px;
    height: 13px;
    margin-right: 5px;
    background: #fdee97;
  }

  .find .gold {
    width: 79px;
    height: 14px;
    line-height: 11px;
  }

  .grid-wrap {
    display: flex;
    margin-top: 6px;
  }

  .grid {
    width: 406px;
  }

  .line {
    display: grid;
    grid-template-columns: 14.5px 121px 121px 97px 52.5px;
    height: 13.35px;
    background: #e6e6e6;
    color: #1c1c1c;
    line-height: 14px;
    font-size: 8.6px;
    letter-spacing: -0.2px;
  }

  .line span {
    overflow: hidden;
    padding-left: 2px;
    border-right: 1px solid #cfcfcf;
    border-bottom: 1px solid #d4d4d4;
    white-space: nowrap;
  }

  .line span:nth-child(3) {
    letter-spacing: -0.22px;
  }

  .line span:first-child {
    padding: 0;
    text-align: center;
  }

  .line span:nth-child(2) {
    letter-spacing: -0.6px;
  }

  .line span:nth-child(4) {
    padding-right: 3px;
    letter-spacing: -0.45px;
    text-align: right;
  }

  .head {
    height: 16px;
    border-top: 1px solid #ccc;
    color: #444;
    line-height: 13px;
  }

  .head span {
    padding-left: 4px;
  }

  .line.head span {
    font-size: 8.8px;
    letter-spacing: -0.2px;
  }

  .head span:nth-child(4) {
    text-align: left;
  }

  .head span:nth-child(2) {
    display: flex;
    justify-content: space-between;
  }

  .sort {
    width: 7px;
    height: 4px;
    margin: 5px 1px 0 0;
    background: #111;
    clip-path: polygon(50% 0, 100% 100%, 0 100%);
  }

  .selected {
    background: #fddd80;
  }

  .selected span:first-child {
    background: #aebac4;
  }

  .hscroll {
    display: flex;
    align-items: center;
    height: 14px;
    margin-left: 14px;
    padding: 0 4px;
    border: 1px solid #c9c9c9;
    background: #f0f0f5;
  }

  .hscroll i {
    width: 350px;
    height: 12px;
    margin-left: 5px;
    border: 1px solid #b9b9b9;
    background: #e4e4e4;
    color: #999;
    font-style: normal;
    line-height: 9px;
    text-align: center;
  }

  .left,
  .right {
    width: 4px;
    height: 7px;
    background: #444;
  }

  .left {
    clip-path: polygon(0 50%, 100% 0, 100% 100%);
  }

  .right {
    margin-left: auto;
    clip-path: polygon(100% 50%, 0 0, 0 100%);
  }

  .grid-side {
    width: 15px;
  }

  .grid-side svg {
    width: 11px;
    height: 11px;
    margin-left: 1px;
    background: #dfe9f3;
    fill: none;
    stroke: #6d94ba;
    stroke-width: 1.3;
  }

  .vscroll {
    display: flex;
    flex-direction: column;
    align-items: center;
    height: 134px;
    margin-top: 5px;
    padding: 4px 1px;
    border: 1px solid #bbb;
    background: #f1f0f7;
  }

  .vscroll i {
    width: 12px;
    height: 8px;
    margin-top: 5px;
    border: 1px solid #bbb;
    background: #e6e6e6;
  }

  .up,
  .down {
    width: 7px;
    height: 4px;
    background: #444;
  }

  .up {
    clip-path: polygon(50% 0, 100% 100%, 0 100%);
  }

  .down {
    margin-top: auto;
    clip-path: polygon(0 0, 100% 0, 50% 100%);
  }

  .dialog .actions {
    margin-top: 5.5px;
  }

  .cursor {
    position: absolute;
    left: 485px;
    top: 247px;
    width: 9px;
    height: 13px;
    fill: #fff;
    stroke: #333;
    stroke-width: 0.8;
  }
</style>
